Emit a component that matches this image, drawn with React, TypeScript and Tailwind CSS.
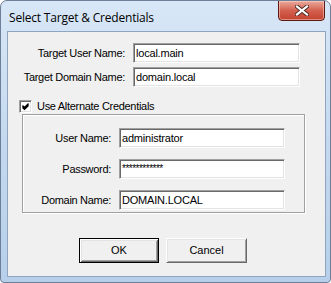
import React from 'react';

const ui = { fontFamily: '"Liberation Sans", Arial, sans-serif' };

const Field: React.FC<{ value: string; width: string; password?: boolean }> = ({ value, width, password }) => (
  <div
    className={`${width} h-[20px] bg-white border border-t-[#a0a0a0] border-l-[#a0a0a0] border-r-white border-b-white shadow-[inset_1px_1px_0_#696969,inset_-1px_-1px_0_#e3e3e3] flex items-center pl-[2px] text-[11px] text-black leading-none overflow-hidden tracking-[-0.2px]`}
  >
    <span className={password ? 'text-[10px] tracking-[-0.5px]' : ''}>{value}</span>
  </div>
);

const Row: React.FC<{ label: string; labelW: string; children: React.ReactNode; className?: string }> = ({ label, labelW, children, className }) => (
  <div className={`flex items-center gap-[8px] ${className ?? ''}`}>
    <div className={`${labelW} text-right text-[11px] text-black tracking-[-0.3px]`}>{label}</div>
    {children}
  </div>
);

export default function App() {
  return (
    <div className="w-[331px] h-[283px] bg-white" style={ui}>
      <div className="w-[331px] h-[283px] rounded-t-[7px] rounded-b-[4px] border border-[#6d7f96] bg-gradient-to-b from-[#d8e7f7] via-[#c4d9ef] to-[#b7cfea] flex flex-col overflow-hidden">
        {/* title bar */}
        <div className="h-[30px] flex items-start relative">
          <div
            className="pl-[8px] pt-[8px] text-[12px] text-black tracking-[-0.2px]"
            style={{ fontFamily: '"Open Sans", "Noto Sans", sans-serif' }}
          >
            Select Target &amp; Credentials
          </div>
          <div className="absolute right-[5px] top-[-1px] w-[47px] h-[21px] rounded-b-[4px] border border-[#5a1a12] bg-gradient-to-b from-[#e8aa9c] via-[#d4604f] to-[#c4412f] shadow-[inset_0_0_0_1px_rgba(255,220,210,0.5)] flex items-center justify-center">
            <svg width="14" height="11" viewBox="0 0 14 11">
              <path d="M2 1.5 L12 9.5 M12 1.5 L2 9.5" stroke="#4a2a26" strokeWidth="4" strokeLinecap="square" />
              <path d="M2 1.5 L12 9.5 M12 1.5 L2 9.5" stroke="#ffffff" strokeWidth="2.2" strokeLinecap="square" />
            </svg>
          </div>
        </div>
        {/* client area */}
        <div className="ml-[6px] w-[319px] h-[246px] border border-[#8fa5bf] bg-[#f0f0f0] flex flex-col">
          <Row label="Target User Name:" labelW="w-[117px]" className="mt-[11px]">
            <Field value="local.main" width="w-[167px]" />
          </Row>
          <Row label="Target Domain Name:" labelW="w-[117px]" className="mt-[4px]">
            <Field value="domain.local" width="w-[167px]" />
          </Row>
          <div className="mt-[12px] h-[15px] flex items-center pl-[11px] gap-[5px]">
            <div className="w-[13px] h-[13px] bg-white border border-t-[#a0a0a0] border-l-[#a0a0a0] border-r-white border-b-white shadow-[inset_1px_1px_0_#696969,inset_-1px_-1px_0_#e3e3e3] flex items-center justify-center">
              <svg width="9" height="9" viewBox="0 0 9 9">
                <path d="M1.5 3.5 L3.5 5.5 L7.5 1.5 M1.5 4.5 L3.5 6.5 L7.5 2.5 M1.5 5.5 L3.5 7.5 L7.5 3.5" stroke="#000" strokeWidth="1.1" fill="none" />
              </svg>
            </div>
            <span className="text-[11px] text-black tracking-[-0.3px]">Use Alternate Credentials</span>
          </div>
          {/* group box */}
          <div className="ml-[14px] w-[283px] h-[99px] border border-[#a0a0a0] shadow-[inset_1px_1px_0_#ffffff,1px_1px_0_#ffffff] flex flex-col">
            <Row label="User Name:" labelW="w-[88px]" className="mt-[13px]">
              <Field value="administrator" width="w-[166px]" />
            </Row>
            <Row label="Password:" labelW="w-[88px]" className="mt-[11px]">
              <Field value="************" width="w-[166px]" password />
            </Row>
            <Row label="Domain Name:" labelW="w-[88px]" className="mt-[11px]">
              <Field value="DOMAIN.LOCAL" width="w-[166px]" />
            </Row>
          </div>
          {/* buttons */}
          <div className="mt-[25px] flex gap-[7px] pl-[71px]">
            <button className="w-[80px] h-[25px] bg-[#f0f0f0] border border-black shadow-[inset_1px_1px_0_#ffffff,inset_-1px_-1px_0_#696969,inset_2px_2px_0_#e3e3e3,inset_-2px_-2px_0_#a0a0a0] text-[11px] text-black">
              OK
            </button>
            <button className="w-[81px] h-[25px] bg-[#f0f0f0] border border-t-white border-l-white border-r-[#696969] border-b-[#696969] shadow-[inset_1px_1px_0_#e3e3e3,inset_-1px_-1px_0_#a0a0a0] text-[11px] text-black">
              Cancel
            </button>
          </div>
        </div>
      </div>
    </div>
  );
}
